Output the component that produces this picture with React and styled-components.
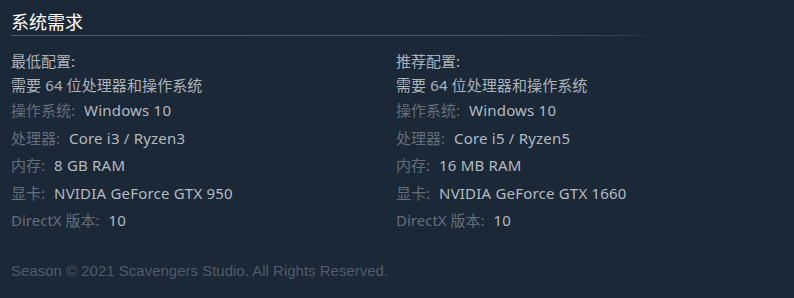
import React from "react";
import styled, { createGlobalStyle } from "styled-components";

const Global = createGlobalStyle`
  html, body { margin: 0; padding: 0; background: #1b2838; }
  body { font-family: "Noto Sans", "Noto Sans CJK SC", sans-serif; }
`;

const Page = styled.div`
  width: 794px;
  height: 298px;
  box-sizing: border-box;
  padding: 9px 11px 0 11px;
  background: #1b2838;
  overflow: hidden;
`;

const Heading = styled.h2`
  margin: 0;
  font-family: "Noto Sans CJK SC", sans-serif;
  font-weight: 400;
  font-size: 18px;
  line-height: 24px;
  color: #ffffff;
  padding-bottom: 3px;
  width: 656px;
  background-image: linear-gradient(to right, #525d69 0%, #4a5561 80%, #35414f 92%, rgba(27,40,56,0) 100%);
  background-size: 100% 1px;
  background-repeat: no-repeat;
  background-position: bottom left;
`;

const Columns = styled.div`
  display: flex;
  margin-top: 13px;
`;

const Column = styled.div`
  width: ${(p) => p.$width}px;
  flex: none;
`;

const ColTitle = styled.div`
  font-family: "Noto Sans CJK SC", sans-serif;
  font-size: 15px;
  line-height: 24px;
  color: #acb2b8;
`;

const Requires = styled.div`
  font-size: 15px;
  line-height: 24px;
  color: #acb2b8;
  letter-spacing: 0.1px;
`;

const List = styled.ul`
  list-style: none;
  margin: 0;
  padding: 0;
`;

const Item = styled.li`
  font-size: 15px;
  line-height: 27.5px;
  color: #b4bac0;
  white-space: nowrap;
  letter-spacing: 0.2px;
`;

const Label = styled.span`
  color: #646e78;
  margin-right: 9px;
  letter-spacing: 0;
`;

const Footer = styled.div`
  margin-top: 28px;
  font-family: "Liberation Sans", Arial, sans-serif;
  font-size: 15px;
  line-height: 16px;
  color: #4f5b68;
`;

const specs = {
  min: {
    title: "最低配置:",
    rows: [
      ["操作系统:", "Windows 10"],
      ["处理器:", "Core i3 / Ryzen3"],
      ["内存:", "8 GB RAM"],
      ["显卡:", "NVIDIA GeForce GTX 950"],
      ["DirectX 版本:", "10"],
    ],
  },
  rec: {
    title: "推荐配置:",
    rows: [
      ["操作系统:", "Windows 10"],
      ["处理器:", "Core i5 / Ryzen5"],
      ["内存:", "16 MB RAM"],
      ["显卡:", "NVIDIA GeForce GTX 1660"],
      ["DirectX 版本:", "10"],
    ],
  },
};

function SpecColumn({ data, width }) {
  return (
    <Column $width={width}>
      <ColTitle>{data.title}</ColTitle>
      <Requires>需要 64 位处理器和操作系统</Requires>
      <List>
        {data.rows.map(([k, v]) => (
          <Item key={k}>
            <Label>{k}</Label>
            {v}
          </Item>
        ))}
      </List>
    </Column>
  );
}

export default function App() {
  return (
    <>
      <Global />
      <Page>
        <Heading>系统需求</Heading>
        <Columns>
          <SpecColumn data={specs.min} width={385} />
          <SpecColumn data={specs.rec} width={385} />
        </Columns>
        <Footer>Season © 2021 Scavengers Studio. All Rights Reserved.</Footer>
      </Page>
    </>
  );
}
